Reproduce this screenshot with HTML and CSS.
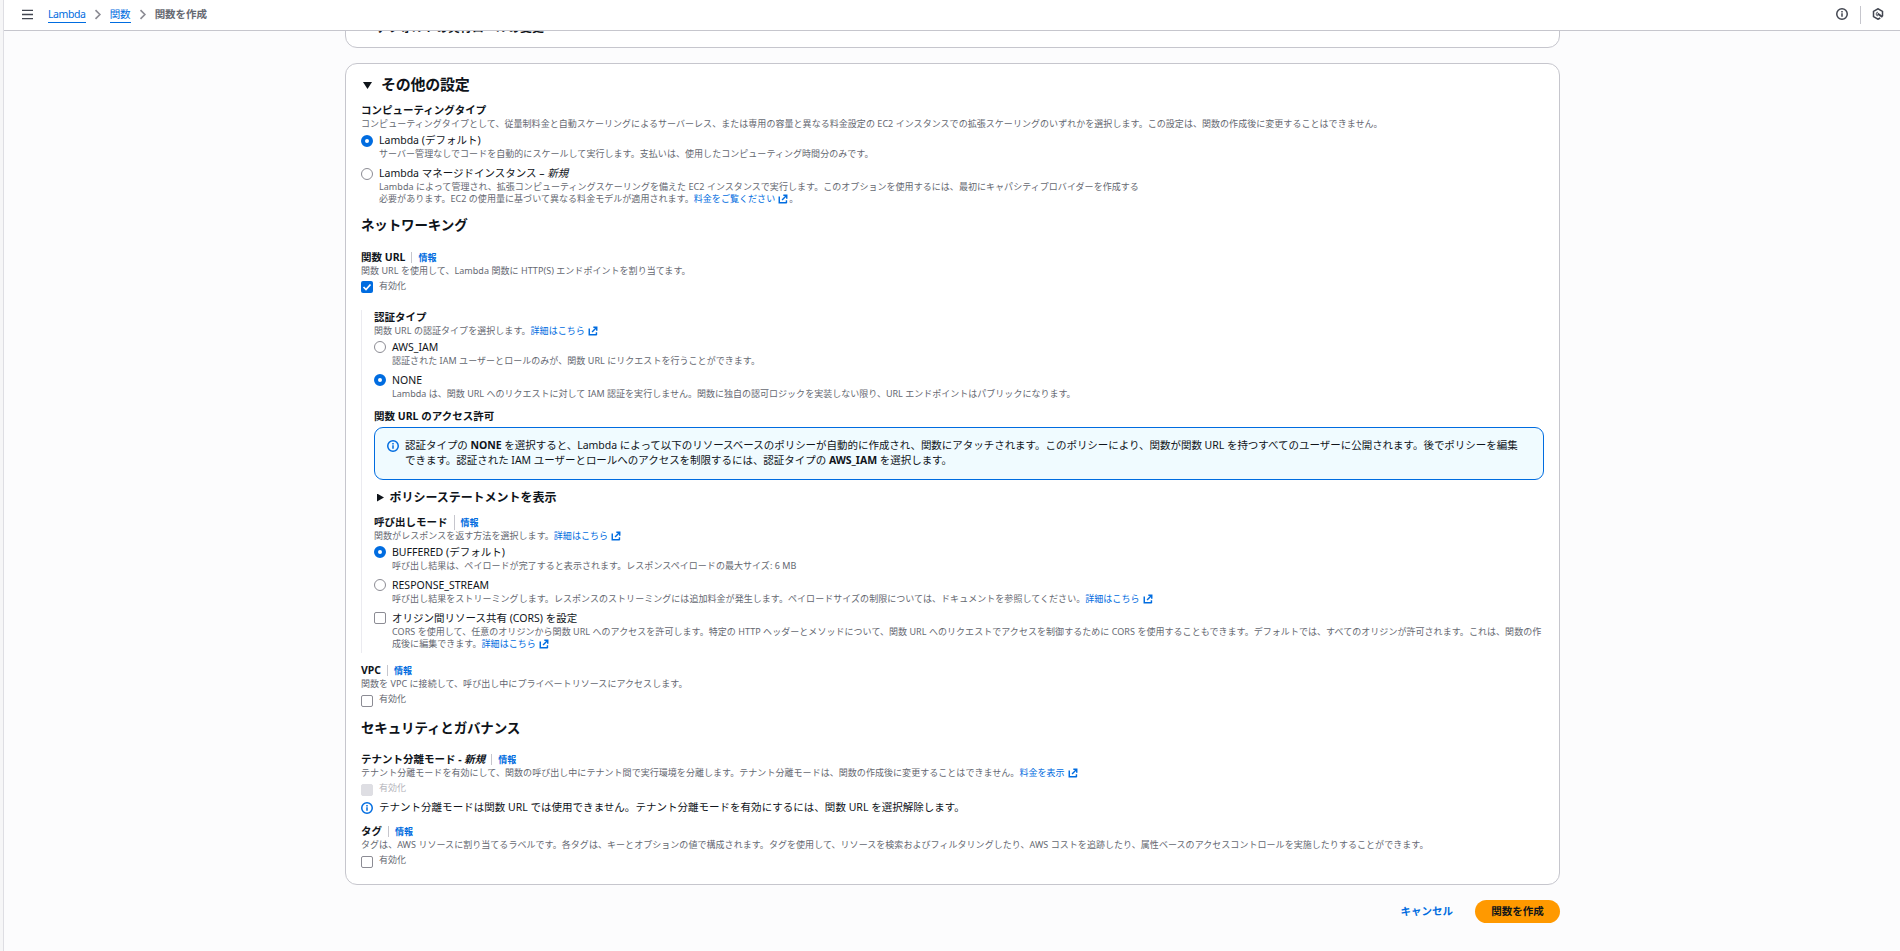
FILE: index.html
```html
<!DOCTYPE html>
<html lang="ja">
<head>
<meta charset="utf-8">
<title>関数を作成</title>
<link rel="stylesheet" href="styles.css">
</head>
<body>
<svg class="defs" width="0" height="0" aria-hidden="true">
  <symbol id="ext" viewBox="0 0 16 16"><path d="M8.500 2H14v5.500M6.500 9.500 14 2M13.500 10v4.500M2 4v10h12" fill="none" stroke="currentColor" stroke-width="2.300"/></symbol>
  <symbol id="info" viewBox="0 0 16 16"><circle cx="8" cy="8" r="7" fill="none" stroke="currentColor" stroke-width="2"/><path d="M8 11.5V7M8 6V4" fill="none" stroke="currentColor" stroke-width="2"/></symbol>
  <symbol id="chev" viewBox="0 0 16 16"><path d="m4 1 7 7-7 7" fill="none" stroke="currentColor" stroke-width="2.600"/></symbol>
</svg>
<div class="app">
  <header class="topbar">
    <svg class="menu" viewBox="0 0 16 16"><path d="M0 2h16M0 8h16M0 14h16" stroke="currentColor" stroke-width="2"/></svg>
    <nav class="crumbs">
      <a class="crumb latin">Lambda</a><svg class="chev"><use href="#chev"/></svg><a class="crumb">関数</a><svg class="chev"><use href="#chev"/></svg><span class="current">関数を作成</span>
    </nav>
    <div class="tools">
      <svg class="tool"><use href="#info"/></svg>
      <i class="rule"></i>
      <svg class="tool" viewBox="0 0 16 16"><path d="M14 11V4.500L8 1 2 4.500v7L8 15l3-1.700" fill="none" stroke="currentColor" stroke-width="2"/><path d="M8 10.500A2.500 2.500 0 0 1 8 5.500" fill="none" stroke="currentColor" stroke-width="1.200"/><path d="m7.500 7.500 6.500 4.500" fill="none" stroke="currentColor" stroke-width="2.600"/></svg>
    </div>
  </header>
  <main class="main">
    <section class="card previous"><h2 class="title">デフォルトの実行ロールの変更</h2></section>
    <section class="card settings">
      <h2 class="title"><i class="tri down"></i>その他の設定</h2>

      <div class="field compute">
        <div class="label">コンピューティングタイプ</div>
        <p class="desc">コンピューティングタイプとして、従量制料金と自動スケーリングによるサーバーレス、または専用の容量と異なる料金設定の EC2 インスタンスでの拡張スケーリングのいずれかを選択します。この設定は、関数の作成後に変更することはできません。</p>
        <div class="option first"><i class="radio on"></i><div><div class="name">Lambda (デフォルト)</div><p class="desc">サーバー管理なしでコードを自動的にスケールして実行します。支払いは、使用したコンピューティング時間分のみです。</p></div></div>
        <div class="option"><i class="radio"></i><div><div class="name">Lambda マネージドインスタンス – <em>新規</em></div><p class="desc">Lambda によって管理され、拡張コンピューティングスケーリングを備えた EC2 インスタンスで実行します。このオプションを使用するには、最初にキャパシティプロバイダーを作成する<br>必要があります。EC2 の使用量に基づいて異なる料金モデルが適用されます。<a class="link">料金をご覧ください<svg class="ext"><use href="#ext"/></svg></a>。</p></div></div>
      </div>

      <h3 class="subhead">ネットワーキング</h3>

      <div class="field url">
        <div class="label">関数 URL<a class="more">情報</a></div>
        <p class="desc">関数 URL を使用して、Lambda 関数に HTTP(S) エンドポイントを割り当てます。</p>
        <div class="check"><i class="box on"><svg viewBox="0 0 12 12"><path d="m2.500 6 2.500 2.500L9.500 3.500" fill="none" stroke="#fff" stroke-width="1.700"/></svg></i>有効化</div>
      </div>

      <div class="nested">
        <div class="label">認証タイプ</div>
        <p class="desc">関数 URL の認証タイプを選択します。<a class="link">詳細はこちら<svg class="ext"><use href="#ext"/></svg></a></p>
        <div class="option first"><i class="radio"></i><div><div class="name">AWS_IAM</div><p class="desc">認証された IAM ユーザーとロールのみが、関数 URL にリクエストを行うことができます。</p></div></div>
        <div class="option"><i class="radio on"></i><div><div class="name">NONE</div><p class="desc tight">Lambda は、関数 URL へのリクエストに対して IAM 認証を実行しません。関数に独自の認可ロジックを実装しない限り、URL エンドポイントはパブリックになります。</p></div></div>
        <div class="label access">関数 URL のアクセス許可</div>
        <div class="alert"><svg class="info"><use href="#info"/></svg><p>認証タイプの <b>NONE</b> を選択すると、Lambda によって以下のリソースベースのポリシーが自動的に作成され、関数にアタッチされます。このポリシーにより、関数が関数 URL を持つすべてのユーザーに公開されます。後でポリシーを編集<br>できます。認証された IAM ユーザーとロールへのアクセスを制限するには、認証タイプの <b>AWS_IAM</b> を選択します。</p></div>
        <div class="expander"><i class="tri right"></i>ポリシーステートメントを表示</div>
        <div class="label invoke">呼び出しモード<a class="more tall">情報</a></div>
        <p class="desc">関数がレスポンスを返す方法を選択します。<a class="link">詳細はこちら<svg class="ext"><use href="#ext"/></svg></a></p>
        <div class="option first"><i class="radio on"></i><div><div class="name">BUFFERED (デフォルト)</div><p class="desc">呼び出し結果は、ペイロードが完了すると表示されます。レスポンスペイロードの最大サイズ: 6 MB</p></div></div>
        <div class="option"><i class="radio"></i><div><div class="name">RESPONSE_STREAM</div><p class="desc">呼び出し結果をストリーミングします。レスポンスのストリーミングには追加料金が発生します。ペイロードサイズの制限については、ドキュメントを参照してください。<a class="link">詳細はこちら<svg class="ext"><use href="#ext"/></svg></a></p></div></div>
        <div class="option"><i class="box"></i><div><div class="name">オリジン間リソース共有 (CORS) を設定</div><p class="desc">CORS を使用して、任意のオリジンから関数 URL へのアクセスを許可します。特定の HTTP ヘッダーとメソッドについて、関数 URL へのリクエストでアクセスを制御するために CORS を使用することもできます。デフォルトでは、すべてのオリジンが許可されます。これは、関数の作<br>成後に編集できます。<a class="link">詳細はこちら<svg class="ext"><use href="#ext"/></svg></a></p></div></div>
      </div>

      <div class="field vpc">
        <div class="label">VPC<a class="more">情報</a></div>
        <p class="desc">関数を VPC に接続して、呼び出し中にプライベートリソースにアクセスします。</p>
        <div class="check low"><i class="box"></i>有効化</div>
      </div>

      <h3 class="subhead security">セキュリティとガバナンス</h3>

      <div class="field tenant">
        <div class="label">テナント分離モード - <em>新規</em><a class="more">情報</a></div>
        <p class="desc">テナント分離モードを有効にして、関数の呼び出し中にテナント間で実行環境を分離します。テナント分離モードは、関数の作成後に変更することはできません。<a class="link">料金を表示<svg class="ext"><use href="#ext"/></svg></a></p>
        <div class="check low disabled"><i class="box"></i>有効化</div>
        <div class="note"><svg class="info"><use href="#info"/></svg>テナント分離モードは関数 URL では使用できません。テナント分離モードを有効にするには、関数 URL を選択解除します。</div>
      </div>

      <div class="field tags">
        <div class="label">タグ<a class="more">情報</a></div>
        <p class="desc">タグは、AWS リソースに割り当てるラベルです。各タグは、キーとオプションの値で構成されます。タグを使用して、リソースを検索およびフィルタリングしたり、AWS コストを追跡したり、属性ベースのアクセスコントロールを実施したりすることができます。</p>
        <div class="check low"><i class="box"></i>有効化</div>
      </div>
    </section>
    <div class="actions"><a class="cancel">キャンセル</a><button class="create">関数を作成</button></div>
  </main>
</div>
</body>
</html>
```
FILE: styles.css
```css
* { box-sizing: border-box; }
body {
  margin: 0;
  height: 951px;
  overflow: hidden;
  background: #f6f6f7;
  color: #0f141a;
  font: 10.5px/15px "Noto Sans", "Noto Sans CJK JP", sans-serif;
}
p, h2, h3 { margin: 0; }
svg { display: block; flex: none; }
.defs { position: absolute; }
.app { height: 951px; margin-left: 3px; border-left: 1px solid #dedee3; background: #fcfcfd; }

.topbar {
  position: relative;
  z-index: 1;
  display: flex;
  align-items: center;
  height: 31px;
  padding: 0 16px 0 18px;
  background: #fff;
  border-bottom: 1px solid #c6c6cd;
  color: #424650;
}
.menu { width: 11px; height: 11px; margin-bottom: 2px; }
.crumbs { display: flex; align-items: center; margin: 0 0 1px 15px; }
.crumb { height: 16px; color: #006ce0; border-bottom: 1px solid #006ce0; line-height: 15px; }
.latin { letter-spacing: -0.4px; }
.chev { width: 10px; height: 11px; margin: 0 7px; color: #8c8c94; }
.current { color: #656871; font-weight: 600; }
.tools { display: flex; align-items: center; margin-left: auto; margin-bottom: 2px; }
.tool { width: 12px; height: 12px; }
.rule { width: 1px; height: 18px; margin: 1px 11px 0 12px; background: #c6c6cd; }

.main { width: 1215px; margin-left: 341px; }
.card { border: 1px solid #c6c6cd; border-radius: 12px; background: #fff; padding: 0 15px; }
.previous { height: 36px; margin-top: -19px; padding-top: 6px; }
.previous .title { padding-left: 15px; font-size: 12px; letter-spacing: 0; }
.settings { height: 822px; margin-top: 15px; padding-top: 11px; }
.title { display: flex; align-items: center; height: 18px; font-size: 15px; line-height: 18px; font-weight: 700; letter-spacing: -0.25px; }
.tri { flex: none; background: #0f141a; }
.down { width: 9px; height: 7px; margin: 3px 9px 0 2px; clip-path: polygon(0 0, 100% 0, 50% 100%); }
.right { width: 7px; height: 8px; margin: 0 5.5px 0 3px; clip-path: polygon(0 0, 100% 50%, 0 100%); }

.label { display: flex; align-items: center; height: 15px; font-weight: 700; white-space: pre; }
.desc { color: #656871; font-size: 9px; line-height: 12px; letter-spacing: 0.005em; white-space: nowrap; }
.tight { letter-spacing: 0.015px; }
.link { color: #006ce0; }
.ext { display: inline-block; width: 10px; height: 10px; margin: 0 1px 0 3px; vertical-align: -2px; }
.more {
  height: 11px;
  margin-left: 6px;
  padding-left: 6px;
  border-left: 1px solid #c6c6cd;
  color: #006ce0;
  font-size: 9px;
  line-height: 12px;
}
.tall { height: 15px; line-height: 16px; }

.option { display: flex; gap: 6px; margin-top: 6px; }
.first { margin-top: 3px; }
.name { height: 15px; }
.radio, .box { flex: none; width: 12px; height: 12px; margin-top: 2px; border: 1px solid #8c8c94; background: #fff; }
.nested .radio, .nested .box { margin-top: 1.4px; }
.radio { border-radius: 50%; }
.radio.on { border: 4px solid #006ce0; }
.box { border-radius: 2px; }
.box.on { background: #006ce0; border: 0; }
.check { display: flex; gap: 6px; height: 12px; margin-top: 3px; color: #656871; font-size: 9px; line-height: 12px; }
.check .box { margin-top: 1px; }
.low .box { margin-top: 2px; }
.disabled { color: #b4b4bb; }
.disabled .box { border-color: #dedee3; background: #dedee3; }

.compute { margin-top: 9.5px; }
.subhead { height: 16.5px; margin-top: 12px; font-size: 13.5px; line-height: 16.5px; font-weight: 700; letter-spacing: -0.13px; }
.url { margin-top: 17px; }
.nested { height: 343px; margin-top: 18px; padding-left: 12px; border-left: 1px solid #ebebf0; }
.access { margin-top: 9px; }
.alert {
  display: flex;
  gap: 6px;
  height: 53px;
  width: 1170px;
  margin-top: 2.5px;
  padding: 10.5px 12px;
  border: 1px solid #006ce0;
  border-radius: 9px;
  background: #f0fbff;
  letter-spacing: -0.03px;
  white-space: nowrap;
}
.info { width: 12px; height: 12px; margin-top: 2px; color: #006ce0; }
.expander { display: flex; align-items: center; height: 18px; margin-top: 9px; font-size: 12px; font-weight: 700; letter-spacing: -0.04px; }
.invoke { margin-top: 8.5px; }
.vpc { margin-top: 10px; }
.security { margin-top: 15px; letter-spacing: -0.15px; }
.tenant { margin-top: 15.5px; }
.note { display: flex; gap: 6px; height: 15px; margin-top: 5.5px; letter-spacing: 0.02px; }
.tags { margin-top: 9px; }

.actions { display: flex; justify-content: flex-end; align-items: center; gap: 22px; margin-top: 15px; }
.cancel { color: #006ce0; font-weight: 700; }
.create {
  width: 85px;
  height: 23px;
  padding: 0;
  border: 0;
  border-radius: 12px;
  background: #ff9900;
  color: #0f141a;
  font: inherit;
  font-weight: 700;
}
```
